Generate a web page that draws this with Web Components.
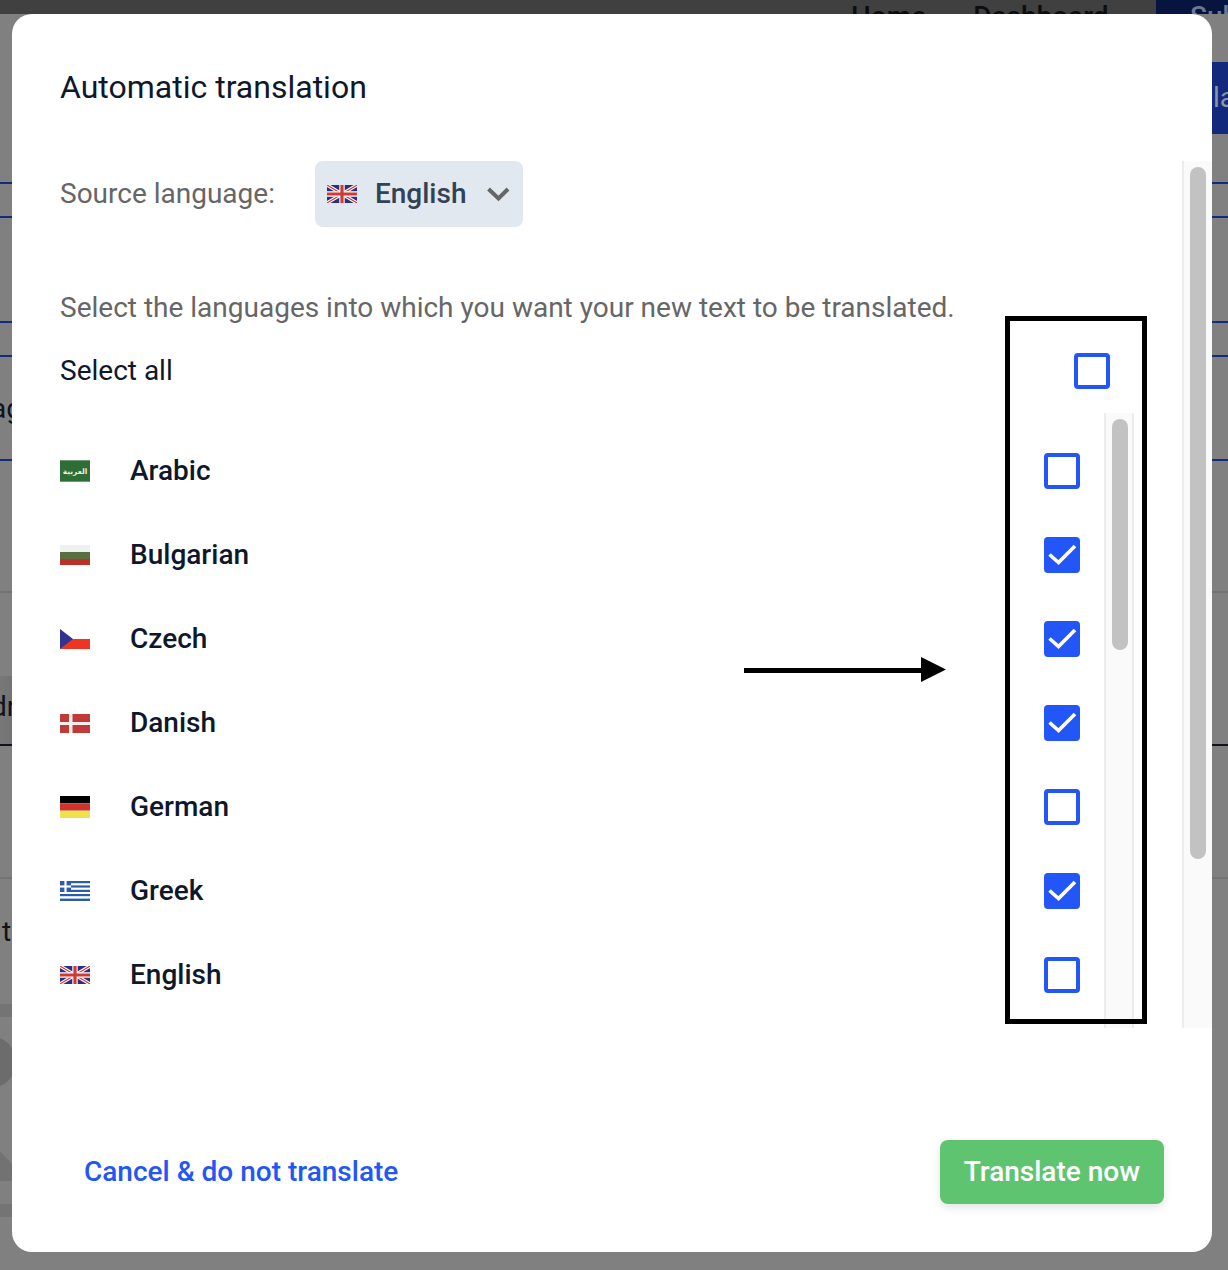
<!DOCTYPE html>
<html lang="en">
<head>
<meta charset="utf-8">
<title>Automatic translation</title>
<style>
    html, body { margin: 0; height: 1270px; overflow: hidden; background: #808080; }
    body { font-family: Roboto, "Liberation Sans", sans-serif; }
</style>
</head>
<body>

<page-behind>
    <bg-row h="48"></bg-row>
    <bg-row h="72" kind="bar"><span slot="end">la</span></bg-row>
    <bg-row h="50" line="#132a7e"></bg-row>
    <bg-row h="34" line="#132a7e"></bg-row>
    <bg-row h="105" line="#132a7e"></bg-row>
    <bg-row h="34" line="#132a7e"></bg-row>
    <bg-row h="104" line="#132a7e"><span>ag</span></bg-row>
    <bg-row h="132" line="#737373"></bg-row>
    <bg-row h="83"></bg-row>
    <bg-row h="70" kind="field" line="#10131c"><span>dr</span></bg-row>
    <bg-row h="133" line="#737373"></bg-row>
    <bg-row h="125" kind="top"><span style="margin-left:11px">t</span></bg-row>
    <svg width="60" height="213" viewBox="0 1003 60 213" style="display:block">
        <rect y="1003" width="60" height="13" fill="#747474"/>
        <circle cx="-10" cy="1061" r="26" fill="#6c6c6c"/>
        <polygon points="0,1150 12,1163 60,1163 60,1180 0,1180" fill="#727272"/>
        <rect y="1203" width="60" height="13" fill="#747474"/>
    </svg>
</page-behind>

<tr-dialog>
    <span slot="title">Automatic translation</span>

    <tr-field>
        <span slot="label">Source language:</span>
        <tr-dropdown flag="gb">English</tr-dropdown>
    </tr-field>

    <tr-hint>Select the languages into which you want your new text to be translated.</tr-hint>

    <tr-select-all>Select all</tr-select-all>

    <tr-list>
        <tr-lang flag="sa">Arabic</tr-lang>
        <tr-lang flag="bg" checked>Bulgarian</tr-lang>
        <tr-lang flag="cz" checked>Czech</tr-lang>
        <tr-lang flag="dk" checked>Danish</tr-lang>
        <tr-lang flag="de">German</tr-lang>
        <tr-lang flag="gr" checked>Greek</tr-lang>
        <tr-lang flag="gb">English</tr-lang>
    </tr-list>

    <a slot="cancel">Cancel &amp; do not translate</a>
    <tr-button slot="submit">Translate now</tr-button>
</tr-dialog>

<tr-callout></tr-callout>

<script>
const BLUE = '#2356f6';

const FLAGS = {
    sa: [30, 22, `<rect width="30" height="22" fill="#2f6d36"/><rect width="30" height="1" fill="#6f9a74"/><rect y="21" width="30" height="1" fill="#6f9a74"/>
        <text x="15" y="13.5" text-anchor="middle" font-size="7.5" font-weight="bold" fill="#e8f0e8" font-family="'DejaVu Sans',sans-serif">العربية</text>`],
    bg: [30, 20, `<rect width="30" height="7" fill="#f0f0f0"/><rect y="7" width="30" height="7" fill="#56703f"/><rect y="14" width="30" height="6" fill="#bd2f27"/>`],
    cz: [30, 20, `<rect width="30" height="10" fill="#fff"/><rect y="10" width="30" height="10" fill="#ee3524"/><polygon points="0,0 13,10 0,20" fill="#2f3492"/>`],
    dk: [30, 19, `<rect width="30" height="19" fill="#c03a37"/><rect x="9" width="3.5" height="19" fill="#f6eeee"/><rect y="8" width="30" height="3" fill="#f6eeee"/>`],
    de: [30, 22, `<rect width="30" height="7.3" fill="#000"/><rect y="7.3" width="30" height="7.4" fill="#d0332b"/><rect y="14.7" width="30" height="7.3" fill="#efe34d"/>`],
    gr: [30, 20, `<rect width="30" height="20" fill="#fff"/>
        <g fill="#2a5cab"><rect width="30" height="2.2"/><rect y="4.4" width="30" height="2.2"/><rect y="8.8" width="30" height="2.2"/><rect y="13" width="30" height="2.2"/><rect y="17.6" width="30" height="2.4"/><rect width="11" height="11"/></g>
        <rect x="4.4" width="2.2" height="11" fill="#fff"/><rect y="4.4" width="11" height="2.2" fill="#fff"/>`],
    gb: [30, 18, `<rect width="30" height="18" fill="#28307f"/>
        <path d="M0 0L30 18M30 0L0 18" stroke="#fff" stroke-width="3.4"/>
        <path d="M0 0L30 18M30 0L0 18" stroke="#d9383a" stroke-width="1.1"/>
        <path d="M15 0V18M0 9H30" stroke="#fff" stroke-width="5.4"/>
        <path d="M15 0V18M0 9H30" stroke="#cf3a36" stroke-width="3.2"/>`]
};

function flagSvg(code) {
    const f = FLAGS[code];
    return `<svg width="${f[0]}" height="${f[1]}" viewBox="0 0 ${f[0]} ${f[1]}" style="display:block;flex:none">${f[2]}</svg>`;
}

/* whatever sits under the dialog, dimmed */
class PageBehind extends HTMLElement {
    constructor() {
        super();
        let shadowRoot = this.attachShadow({mode:'open'});
        shadowRoot.innerHTML = `
        <style>
            :host { display:block; height:1270px; overflow:hidden; color:#10131c; font-size:28px; }
            .nav { height:14px; display:flex; background:#404040; overflow:hidden; font-weight:500; line-height:33px; }
            .links { flex:1; display:flex; gap:47px; padding-left:851px; color:#0d0d0d; }
            .cta { width:72px; background:#06143f; color:#6f7690; padding-left:34px; box-sizing:border-box; white-space:nowrap; }
        </style>
        <div class=nav>
            <div class=links><span>Home</span><span>Dashboard</span></div>
            <div class=cta>Sub</div>
        </div>
        <slot></slot>
        `;
    }
}
customElements.define('page-behind', PageBehind);

class BgRow extends HTMLElement {
    constructor() {
        super();
        let shadowRoot = this.attachShadow({mode:'open'});
        shadowRoot.innerHTML = `
        <style>
            :host { display:flex; box-sizing:border-box; align-items:center; overflow:hidden; justify-content:space-between; }
            :host([kind=field]) { background:linear-gradient(90deg,#787878,#737373 12px,#808080 12px); padding-bottom:8px; }
            :host([kind=top]) { align-items:flex-start; padding-top:36px; }
            slot:not([name]) { display:block; margin-left:-9px; white-space:nowrap; }
            .end { display:block; width:38px; height:100%; box-sizing:border-box; padding-left:23px; }
            :host([kind=bar]) .end { background:#12297c; color:#8c93ad; line-height:72px; }
        </style>
        <slot></slot>
        <div class=end><slot name=end></slot></div>
        `;
    }
    connectedCallback() {
        this.style.height = this.getAttribute('h') + 'px';
        if (this.hasAttribute('line')) this.style.borderBottom = '2px solid ' + this.getAttribute('line');
    }
}
customElements.define('bg-row', BgRow);

class TrDialog extends HTMLElement {
    constructor() {
        super();
        let shadowRoot = this.attachShadow({mode:'open'});
        shadowRoot.innerHTML = `
        <style>
            :host {
                position:absolute; left:12px; top:14px; width:1200px; height:1238px;
                background:#fff; border-radius:20px; overflow:hidden;
                display:flex; flex-direction:column;
            }
            .title { padding:54px 48px 0; height:147px; box-sizing:border-box; font-size:32px; line-height:38px; color:#0f172a; }
            .body { height:867px; display:flex; }
            .content { flex:1; min-width:0; padding-left:48px; display:flex; flex-direction:column; }
            .foot { flex:1; display:flex; align-items:flex-end; justify-content:space-between; padding:0 48px 48px; }
            ::slotted(a) { color:${BLUE}; font-size:28px; font-weight:500; line-height:64px; padding-left:24px; }
        </style>
        <div class=title><slot name=title></slot></div>
        <div class=body>
            <div class=content><slot></slot></div>
            <tr-scrollbar thumb="692"></tr-scrollbar>
        </div>
        <div class=foot><slot name=cancel></slot><slot name=submit></slot></div>
        `;
    }
}
customElements.define('tr-dialog', TrDialog);

/* drawn scrollbar, always visible like the mac "always show" one */
class TrScrollbar extends HTMLElement {
    constructor() {
        super();
        let shadowRoot = this.attachShadow({mode:'open'});
        shadowRoot.innerHTML = `
        <style>
            :host { display:block; flex:none; width:30px; box-sizing:border-box; background:#fafafa; border-left:2px solid #ececec; padding:6px 0 0 6px; }
            :host([framed]) { border-right:2px solid #ececec; }
            .thumb { width:16px; border-radius:8px; background:#c2c2c2; }
        </style>
        <div class=thumb></div>
        `;
    }
    connectedCallback() {
        this.shadowRoot.querySelector('.thumb').style.height = this.getAttribute('thumb') + 'px';
    }
}
customElements.define('tr-scrollbar', TrScrollbar);

class TrField extends HTMLElement {
    constructor() {
        super();
        let shadowRoot = this.attachShadow({mode:'open'});
        shadowRoot.innerHTML = `
        <style>
            :host { display:flex; align-items:center; gap:40px; font-size:28px; color:#666; }
            ::slotted([slot=label]) { padding-bottom:2px; }
        </style>
        <slot name=label></slot>
        <slot></slot>
        `;
    }
}
customElements.define('tr-field', TrField);

class TrDropdown extends HTMLElement {
    constructor() {
        super();
        let shadowRoot = this.attachShadow({mode:'open'});
        shadowRoot.innerHTML = `
        <style>
            :host { display:flex; align-items:center; width:208px; height:66px; box-sizing:border-box; padding-left:12px; background:#e2e8f0; border-radius:8px; color:#334155; font-size:28px; font-weight:500; }
            .text { margin:0 20px 0 18px; padding-bottom:2px; }
        </style>
        ${flagSvg(this.getAttribute('flag'))}
        <span class=text><slot></slot></span>
        <svg width="24" height="16" viewBox="0 0 24 16"><path d="M2.5 3L12.500 12.500L22 3" fill="none" stroke="#666" stroke-width="4"/></svg>
        `;
    }
}
customElements.define('tr-dropdown', TrDropdown);

class TrHint extends HTMLElement {
    constructor() {
        super();
        let shadowRoot = this.attachShadow({mode:'open'});
        shadowRoot.innerHTML = `
        <style>
            :host { display:block; margin-top:61px; font-size:28px; line-height:40px; color:#666; white-space:nowrap; }
        </style>
        <slot></slot>
        `;
    }
}
customElements.define('tr-hint', TrHint);

class TrCheck extends HTMLElement {
    constructor() {
        super();
        let shadowRoot = this.attachShadow({mode:'open'});
        shadowRoot.innerHTML = `
        <style>
            :host { display:block; flex:none; width:36px; height:36px; box-sizing:border-box; border:4px solid ${BLUE}; border-radius:4px; background:#fff; }
            :host([checked]) { background:${BLUE}; }
            svg { display:none; margin:-4px; }
            :host([checked]) svg { display:block; }
        </style>
        <svg width="36" height="36" viewBox="0 0 36 36"><path d="M5.500 17.500L14.500 25.500L31 9" fill="none" stroke="#fff" stroke-width="3.600"/></svg>
        `;
    }
}
customElements.define('tr-check', TrCheck);

class TrSelectAll extends HTMLElement {
    constructor() {
        super();
        let shadowRoot = this.attachShadow({mode:'open'});
        shadowRoot.innerHTML = `
        <style>
            :host { display:flex; align-items:center; justify-content:space-between; margin-top:23px; height:40px; padding-right:72px; font-size:28px; color:#0f172a; }
            .text { padding-bottom:2px; }
        </style>
        <span class=text><slot></slot></span>
        <tr-check></tr-check>
        `;
    }
}
customElements.define('tr-select-all', TrSelectAll);

class TrList extends HTMLElement {
    constructor() {
        super();
        let shadowRoot = this.attachShadow({mode:'open'});
        shadowRoot.innerHTML = `
        <style>
            :host { display:flex; flex:1; min-height:0; margin:22px 48px 0 0; overflow:hidden; }
            .rows { flex:1; padding:16px 24px 0 0; }
        </style>
        <div class=rows><slot></slot></div>
        <tr-scrollbar framed thumb="231"></tr-scrollbar>
        `;
    }
}
customElements.define('tr-list', TrList);

class TrLang extends HTMLElement {
    constructor() {
        super();
        let shadowRoot = this.attachShadow({mode:'open'});
        shadowRoot.innerHTML = `
        <style>
            :host { display:flex; align-items:center; height:84px; font-size:28px; font-weight:500; color:#0f172a; }
            .name { flex:1; margin-left:40px; padding-bottom:2px; }
        </style>
        ${flagSvg(this.getAttribute('flag'))}
        <span class=name><slot></slot></span>
        <tr-check ${this.hasAttribute('checked') ? 'checked' : ''}></tr-check>
        `;
    }
}
customElements.define('tr-lang', TrLang);

class TrButton extends HTMLElement {
    constructor() {
        super();
        let shadowRoot = this.attachShadow({mode:'open'});
        shadowRoot.innerHTML = `
        <style>
            :host { display:block; height:64px; padding:0 24px; border-radius:8px; background:#5fc470; color:#fff; font-size:28px; font-weight:500; line-height:64px; box-shadow:0 4px 10px rgba(0,0,0,.1); }
        </style>
        <slot></slot>
        `;
    }
}
customElements.define('tr-button', TrButton);

/* the black box and arrow somebody drew over the screenshot */
class TrCallout extends HTMLElement {
    constructor() {
        super();
        let shadowRoot = this.attachShadow({mode:'open'});
        shadowRoot.innerHTML = `
        <style>
            :host { position:absolute; left:744px; top:316px; width:403px; height:708px; pointer-events:none; }
            .box { position:absolute; left:261px; top:0; width:142px; height:708px; box-sizing:border-box; border:5px solid #000; }
            svg { position:absolute; left:0; top:341px; }
        </style>
        <div class=box></div>
        <svg width="202" height="25" viewBox="0 0 202 25"><rect y="11" width="178" height="5"/><polygon points="177,0 202,12.500 177,25"/></svg>
        `;
    }
}
customElements.define('tr-callout', TrCallout);
</script>
</body>
</html>
